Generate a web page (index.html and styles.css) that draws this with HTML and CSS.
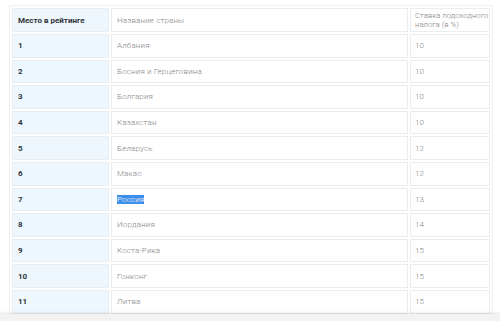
FILE: index.html
```html
<!DOCTYPE html>
<html lang="ru">
<head>
<meta charset="utf-8">
<title>Ставки подоходного налога</title>
<link rel="stylesheet" href="styles.css">
</head>
<body>
<div class="page">
  <table class="rating">
    <thead>
      <tr>
        <th class="rank">Место в рейтинге</th>
        <th class="country">Название страны</th>
        <th class="rate">Ставка подоходного<br>налога (в %)</th>
      </tr>
    </thead>
    <tbody>
      <tr><td class="rank">1</td><td class="country">Албания</td><td>10</td></tr>
      <tr><td class="rank">2</td><td class="country">Босния и Герцеговина</td><td>10</td></tr>
      <tr><td class="rank">3</td><td class="country">Болгария</td><td>10</td></tr>
      <tr><td class="rank">4</td><td class="country">Казахстан</td><td>10</td></tr>
      <tr><td class="rank">5</td><td class="country">Беларусь</td><td>12</td></tr>
      <tr><td class="rank">6</td><td class="country">Макао</td><td>12</td></tr>
      <tr><td class="rank">7</td><td class="country"><span class="selected">Россия</span></td><td>13</td></tr>
      <tr><td class="rank">8</td><td class="country">Иордания</td><td>14</td></tr>
      <tr><td class="rank">9</td><td class="country">Коста-Рика</td><td>15</td></tr>
      <tr><td class="rank">10</td><td class="country">Гонконг</td><td>15</td></tr>
      <tr><td class="rank">11</td><td class="country">Литва</td><td>15</td></tr>
    </tbody>
  </table>
</div>
<div class="bottom-bar"></div>
</body>
</html>
```

FILE: styles.css
```css
html, body {
  margin: 0;
  padding: 0;
  background: #ffffff;
  overflow: hidden;
}

body {
  font-family: Roboto, "Liberation Sans", sans-serif;
  font-size: 8px;
  color: #858585;
}

.page {
  padding: 5px 0 0 9px;
}

.rating {
  border: 1px solid #eef0f1;
  border-collapse: separate;
  border-spacing: 2px 2px;
  width: 484px;
  table-layout: fixed;
}

.rating th,
.rating td {
  border: 1px solid #e9edef;
  background: #ffffff;
  padding: 0 5px;
  height: 21.6px;
  text-align: left;
  vertical-align: middle;
  font-weight: 300;
  line-height: 9px;
}

.rating th:nth-child(1) { width: 85px; }
.rating th:nth-child(2) { width: 285px; }

.rating th {
  height: 20px;
}

.rating .country {
  letter-spacing: 0.15px;
}

.rating th.rate {
  vertical-align: top;
  padding: 2px 1px 0 4px;
  white-space: nowrap;
  font-size: 7.8px;
}

.rating td:nth-child(3) {
  padding-left: 4px;
}

.rating .rank {
  background: #eef7fd;
  color: #2f3439;
  font-weight: 700;
}

.selected {
  background: #3c8ee8;
  color: #ffffff;
}

.bottom-bar {
  position: fixed;
  left: 0;
  right: 0;
  bottom: 0;
  height: 7px;
  background: #f2f2f2;
  box-shadow: 0 -1px 3px rgba(0, 0, 0, 0.12);
}
```
